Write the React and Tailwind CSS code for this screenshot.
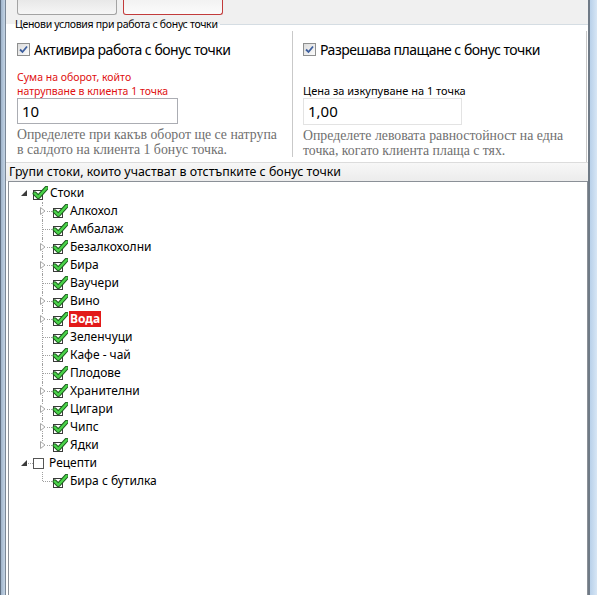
import React from 'react';

const UI = { fontFamily: '"Noto Sans", "Open Sans", sans-serif' };
const SERIF = { fontFamily: '"Liberation Serif", "DejaVu Serif", serif' };

const ITEMS = [
  { name: 'Алкохол', kids: true },
  { name: 'Амбалаж', kids: false },
  { name: 'Безалкохолни', kids: true },
  { name: 'Бира', kids: true },
  { name: 'Ваучери', kids: false },
  { name: 'Вино', kids: true },
  { name: 'Вода', kids: true, sel: true },
  { name: 'Зеленчуци', kids: false },
  { name: 'Кафе - чай', kids: false },
  { name: 'Плодове', kids: false },
  { name: 'Хранителни', kids: true },
  { name: 'Цигари', kids: true },
  { name: 'Чипс', kids: true },
  { name: 'Ядки', kids: true },
];

function CheckIcon() {
  return (
    <svg width="16" height="14" viewBox="0 0 16 14" className="shrink-0">
      <rect x="1.5" y="4.5" width="9" height="9" fill="#fff" stroke="#3a3a3a" />
      <path d="M2.8 7.5 L6.3 11 L14.5 2" fill="none" stroke="#1e5e1e" strokeWidth="4.4" strokeLinecap="round" strokeLinejoin="round" />
      <path d="M2.8 7.5 L6.3 11 L14.5 2" fill="none" stroke="#4ad44a" strokeWidth="2.4" strokeLinecap="round" strokeLinejoin="round" />
    </svg>
  );
}

function WinCheck() {
  return (
    <span className="w-[13px] h-[13px] border border-[#8e8f8f] bg-gradient-to-br from-[#dcdcdc] to-[#fbfbfb] flex items-center justify-center shrink-0">
      <svg width="9" height="9" viewBox="0 0 9 9">
        <path d="M1 4.5 L3.5 7 L8 1.5" fill="none" stroke="#3d5f9e" strokeWidth="1.8" />
      </svg>
    </span>
  );
}

function Collapsed() {
  return (
    <svg width="6" height="8" viewBox="0 0 6 8">
      <path d="M0.5 0.5 L5 4 L0.5 7.5 Z" fill="#fff" stroke="#a6a6a6" />
    </svg>
  );
}

function Expanded() {
  return (
    <svg width="6" height="6" viewBox="0 0 6 6">
      <path d="M6 0 L6 6 L0 6 Z" fill="#3b3b3b" />
    </svg>
  );
}

function ChildRow({ item, last }) {
  return (
    <div className="h-[18px] flex items-center">
      <div className="relative w-[43px] h-full shrink-0">
        <div className={`absolute left-[33px] top-0 border-l border-dotted border-[#a0a0a0] ${last ? 'h-[9px]' : 'h-full'}`} />
        <div className="absolute left-[34px] top-[9px] w-[9px] border-t border-dotted border-[#a0a0a0]" />
        {item.kids && (
          <div className="absolute left-[31px] top-[5px] w-[6px] h-[8px] bg-white flex">
            <Collapsed />
          </div>
        )}
      </div>
      <CheckIcon />
      <span
        className={`ml-[1px] px-[1px] leading-[16px] text-[12px] ${item.sel ? 'bg-[#e21a1a] text-white font-bold' : 'text-black'}`}
      >
        {item.name}
      </span>
    </div>
  );
}

export default function App() {
  return (
    <div className="w-[597px] h-[595px] flex bg-white overflow-hidden" style={UI}>
      {/* left window frame */}
      <div className="w-[6px] h-full flex shrink-0">
        <div className="w-[1px] bg-[#5f6f82]" />
        <div className="w-[4px] bg-gradient-to-r from-[#9fb4cb] to-[#c3d3e4]" />
        <div className="w-[1px] bg-[#7a8796]" />
      </div>

      <div className="flex-1 flex flex-col min-w-0">
        {/* top buttons strip */}
        <div className="h-[17px] bg-[#f0f0f0] flex items-start gap-[6px] pl-[11px]">
          <div className="w-[100px] h-[15px] border border-t-0 border-[#a3a3a3] rounded-b-[3px] bg-gradient-to-b from-[#e8e8e8] to-[#f6f6f6]" />
          <div className="w-[100px] h-[15px] border border-t-0 border-[#c23b3b] rounded-b-[3px] bg-gradient-to-b from-[#f2f2f2] to-[#fbfbfb]" />
        </div>

        {/* group caption */}
        <div className="h-[14px] flex items-center bg-[linear-gradient(#f0f0f0_50%,#ffffff_50%)]">
          <span className="pl-[9px] pr-[2px] text-[10.5px] tracking-[-0.3px] leading-[14px] text-black whitespace-nowrap">
            Ценови условия при работа с бонус точки
          </span>
          <div className="flex-1 h-px bg-[#d5dde3]" />
        </div>

        {/* group body */}
        <div className="h-[131px] flex border-r border-[#c9c9c9] mr-[1px]">
          <div className="w-[287px] pl-[11px] pt-[10px] flex flex-col border-r border-[#c9c9c9] mb-[5px]">
            <label className="flex items-center gap-[4px] h-[16px] text-[14px] tracking-[-0.5px] text-black">
              <WinCheck />
              <span>Активира работа с бонус точки</span>
            </label>
            <div className="mt-[13px] text-[10.5px] leading-[14px] text-[#e01010] whitespace-nowrap">
              <div>Сума на оборот, който</div>
              <div>натрупване в клиента 1 точка</div>
            </div>
            <div className="w-[161px] h-[27px] border border-[#abadb3] flex items-center pl-[4px] text-[15px] text-black">
              10
            </div>
            <div className="mt-[3px] text-[13.8px] leading-[15px] text-[#6f6f6f] whitespace-nowrap" style={SERIF}>
              <div>Определете при какъв оборот ще се натрупа</div>
              <div>в салдото на клиента 1 бонус точка.</div>
            </div>
          </div>
          <div className="flex-1 pl-[10px] pt-[10px] flex flex-col">
            <label className="flex items-center gap-[4px] h-[16px] text-[14px] tracking-[-0.5px] text-black">
              <WinCheck />
              <span>Разрешава плащане с бонус точки</span>
            </label>
            <div className="mt-[27px] text-[11px] leading-[14px] text-black">Цена за изкупуване на 1 точка</div>
            <div className="w-[159px] h-[27px] border border-[#e3e3e3] flex items-center pl-[4px] text-[15px] text-black">
              1,00
            </div>
            <div className="mt-[3px] text-[13.8px] leading-[15px] text-[#6f6f6f] whitespace-nowrap" style={SERIF}>
              <div>Определете левовата равностойност на една</div>
              <div>точка, когато клиента плаща с тях.</div>
            </div>
          </div>
        </div>

        {/* tree header */}
        <div className="h-[19px] border-t border-[#dcdcdc] bg-gradient-to-b from-[#f7f7f7] to-[#ececec] flex items-center pl-[3px] text-[12.4px] text-black">
          Групи стоки, които участват в отстъпките с бонус точки
        </div>

        {/* tree */}
        <div className="flex-1 ml-[2px] border border-b-0 border-[#8b9097] bg-white pt-[2px]">
          <div className="h-[18px] flex items-center">
            <div className="w-[11px] shrink-0" />
            <div className="w-[8px] flex justify-center shrink-0"><Expanded /></div>
            <div className="w-[4px] h-full shrink-0" />
            <CheckIcon />
            <span className="ml-[2px] text-[12px] leading-[16px]">Стоки</span>
          </div>
          {ITEMS.map((it, i) => (
            <ChildRow key={it.name} item={it} last={i === ITEMS.length - 1} />
          ))}
          <div className="h-[18px] flex items-center">
            <div className="w-[11px] shrink-0" />
            <div className="w-[8px] flex justify-center shrink-0"><Expanded /></div>
            <div className="w-[5px] border-t border-dotted border-[#a0a0a0] shrink-0" />
            <span className="w-[11px] h-[11px] border border-[#555] bg-white shrink-0 mr-[5px]" />
            <span className="text-[12px] leading-[16px]">Рецепти</span>
          </div>
          <ChildRow item={{ name: 'Бира с бутилка', kids: false }} last />
        </div>
      </div>

      {/* right window frame */}
      <div className="w-[9px] h-full flex shrink-0">
        <div className="w-[2px] bg-[#6f7a86]" />
        <div className="w-[7px] bg-gradient-to-r from-[#b9d1ea] to-[#d7e6f5]" />
      </div>
    </div>
  );
}
